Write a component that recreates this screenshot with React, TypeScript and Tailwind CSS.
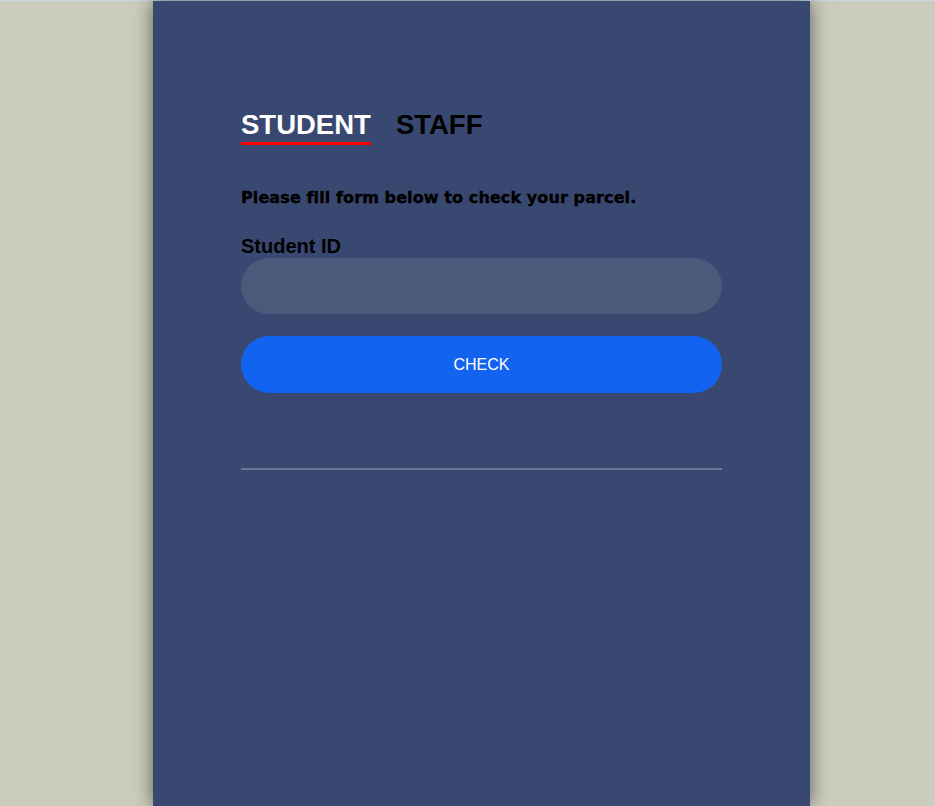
import React, { useState } from 'react';

export default function App() {
  const [tab, setTab] = useState<'student' | 'staff'>('student');

  return (
    <div className="min-h-[806px] bg-[#cbccbc] border-t border-[#c6d6e6] font-['Liberation_Sans',Arial,sans-serif]">
      <div className="ml-[153px] w-[657px] min-h-[805px] bg-[#394870] shadow-[0_0_18px_rgba(0,0,0,0.55)] pl-[88px] pt-[108px]">
        <div className="w-[481px]">
          {/* Tabs */}
          <div className="flex gap-[25px]">
            <button
              onClick={() => setTab('student')}
              className={`text-[27.5px] font-bold leading-[31px] pb-[2px] border-b-[3px] ${tab === 'student' ? 'text-white border-[#ff0000]' : 'text-black border-transparent'}`}
            >
              STUDENT
            </button>
            <button
              onClick={() => setTab('staff')}
              className={`text-[27.5px] font-bold leading-[31px] pb-[2px] border-b-[3px] ${tab === 'staff' ? 'text-white border-[#ff0000]' : 'text-black border-transparent'}`}
            >
              STAFF
            </button>
          </div>

          <p className="mt-[44px] font-['DejaVu_Sans',sans-serif] text-[16px] font-bold leading-[18px] tracking-[0.1px] text-black [-webkit-text-stroke:0.4px_black]">
            Please fill form below to check your parcel.
          </p>

          <label className="block mt-[28px] text-[20px] font-bold leading-[22px] text-black">
            {tab === 'student' ? 'Student ID' : 'Staff ID'}
          </label>
          <input
            type="text"
            className="block mt-px w-full h-[56px] rounded-full bg-[#4b5a7a] px-6 text-white outline-none"
          />

          <button className="mt-[22px] w-full h-[57px] rounded-full bg-[#1263ef] text-white text-[16px] pt-px">
            CHECK
          </button>

          <div className="mt-[75px] h-[2px] bg-[#6b7793]" />
        </div>
      </div>
    </div>
  );
}
